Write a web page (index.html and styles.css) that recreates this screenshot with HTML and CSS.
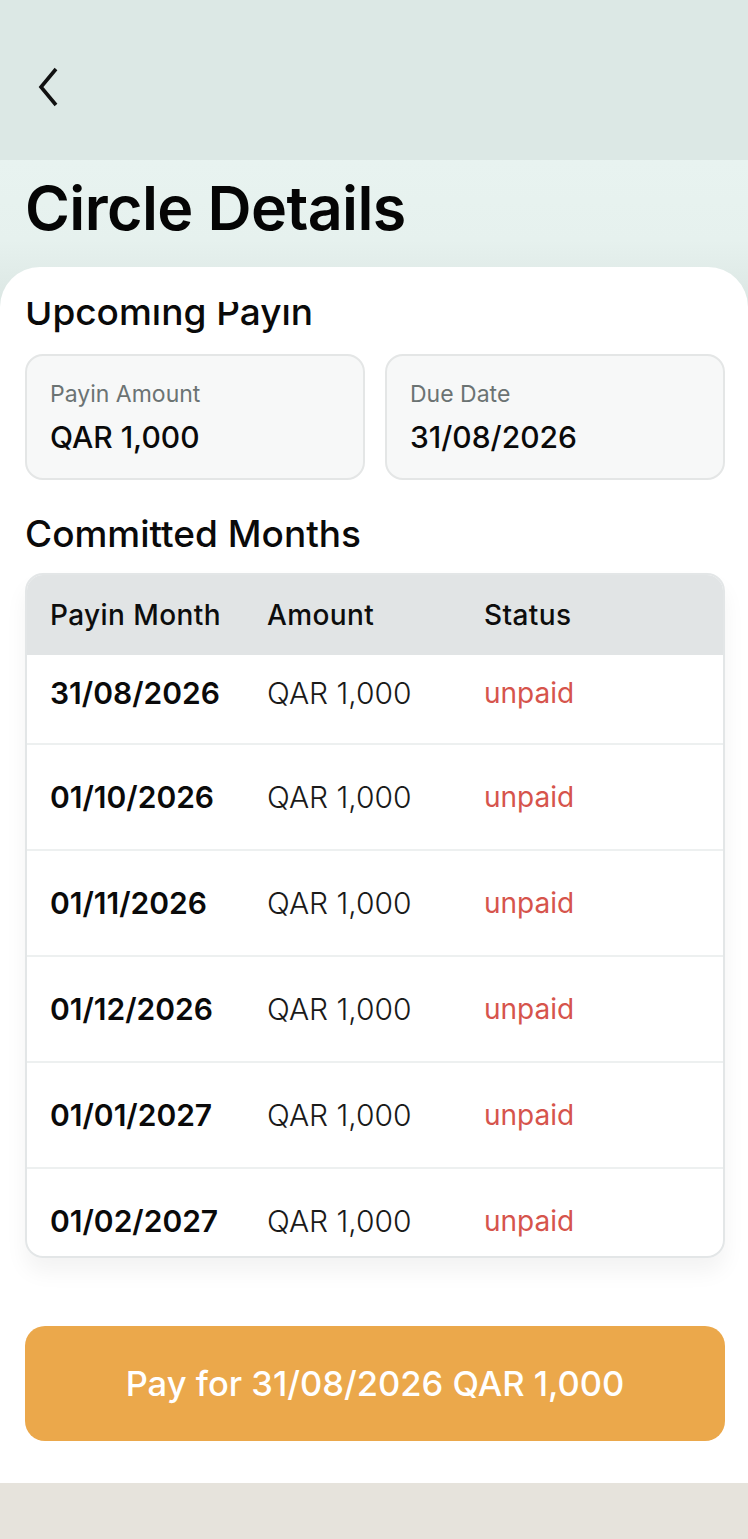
FILE: index.html
```html
<!DOCTYPE html>
<html lang="en">
<head>
    <meta charset="UTF-8">
    <meta name="viewport" content="width=device-width, initial-scale=1.0">
    <title>Circle Details</title>
    <link rel="stylesheet" href="styles.css">
</head>
<body>
    <div class="page">
        <div class="topbar">
            <a href="#" class="back-btn" aria-label="Back">
                <svg width="24" height="40" viewBox="0 0 24 40">
                    <path d="M20 2 L5 20 L20 38" fill="none" stroke="#111" stroke-width="3.6"/>
                </svg>
            </a>
        </div>

        <div class="title-area">
            <h1>Circle Details</h1>
        </div>

        <div class="sheet">
            <div class="scroll">
                <h2 class="section-title upcoming">Upcoming Payin</h2>

                <div class="info-row">
                    <div class="info-card">
                        <span class="info-label">Payin Amount</span>
                        <span class="info-value">QAR 1,000</span>
                    </div>
                    <div class="info-card">
                        <span class="info-label">Due Date</span>
                        <span class="info-value">31/08/2026</span>
                    </div>
                </div>

                <h2 class="section-title committed">Committed Months</h2>

                <div class="table">
                    <div class="table-head">
                        <span>Payin Month</span>
                        <span>Amount</span>
                        <span>Status</span>
                    </div>
                    <div class="table-body">
                        <div class="table-row first">
                            <span class="date">31/08/2026</span>
                            <span class="amount">QAR 1,000</span>
                            <span class="status">unpaid</span>
                        </div>
                        <div class="table-row">
                            <span class="date">01/10/2026</span>
                            <span class="amount">QAR 1,000</span>
                            <span class="status">unpaid</span>
                        </div>
                        <div class="table-row">
                            <span class="date">01/11/2026</span>
                            <span class="amount">QAR 1,000</span>
                            <span class="status">unpaid</span>
                        </div>
                        <div class="table-row">
                            <span class="date">01/12/2026</span>
                            <span class="amount">QAR 1,000</span>
                            <span class="status">unpaid</span>
                        </div>
                        <div class="table-row">
                            <span class="date">01/01/2027</span>
                            <span class="amount">QAR 1,000</span>
                            <span class="status">unpaid</span>
                        </div>
                        <div class="table-row">
                            <span class="date">01/02/2027</span>
                            <span class="amount">QAR 1,000</span>
                            <span class="status">unpaid</span>
                        </div>
                    </div>
                </div>

                <button class="pay-btn">Pay for 31/08/2026 QAR 1,000</button>
            </div>
        </div>

        <div class="bottom-bar"></div>
    </div>
</body>
</html>
```

FILE: styles.css
```css
* {
    box-sizing: border-box;
}

body {
    margin: 0;
    font-family: Inter, "Liberation Sans", sans-serif;
    color: #111;
    background: #e6e3dc;
}

.page {
    width: 748px;
    height: 1539px;
    display: flex;
    flex-direction: column;
    overflow: hidden;
}

.topbar {
    height: 160px;
    flex-shrink: 0;
    background: #dce8e5;
    display: flex;
    align-items: center;
    padding-left: 36px;
    padding-top: 14px;
}

.back-btn {
    display: flex;
}

.title-area {
    height: 147px;
    flex-shrink: 0;
    margin-bottom: -40px;
    background: linear-gradient(180deg, #e8f3f0 0%, #e6f1ee 55%, #dbe6e3 100%);
    padding: 12px 25px 0;
}

.title-area h1 {
    margin: 0;
    font-size: 61px;
    font-weight: 600;
    line-height: 72px;
    letter-spacing: -0.6px;
    color: #050505;
}

.sheet {
    flex: 1;
    background: #fff;
    border-radius: 40px 40px 0 0;
    padding-top: 35px;
    overflow: hidden;
}

.scroll {
    display: flow-root;
    height: 100%;
    overflow: hidden;
    padding: 0 23px 0 25px;
}

.section-title {
    margin: 0;
    font-size: 37px;
    font-weight: 500;
    line-height: 40px;
    color: #0a0a0a;
}

.upcoming {
    margin-top: -10px;
}

.info-row {
    display: grid;
    grid-template-columns: 1fr 1fr;
    gap: 20px;
    margin-top: 22px;
}

.info-card {
    height: 126px;
    background: #f7f8f8;
    border: 2px solid #e4e6e6;
    border-radius: 18px;
    padding: 24px 23px;
    display: flex;
    flex-direction: column;
    gap: 12px;
}

.info-label {
    font-size: 23px;
    line-height: 28px;
    color: #6b7373;
}

.info-value {
    font-size: 30px;
    line-height: 34px;
    font-weight: 500;
    color: #0a0a0a;
}

.committed {
    margin-top: 34px;
}

.table {
    margin-top: 19px;
    height: 685px;
    border: 2px solid #e3e6e7;
    border-radius: 18px;
    overflow: hidden;
    box-shadow: 0 14px 22px rgba(0, 0, 0, 0.05);
}

.table-head,
.table-row {
    display: grid;
    grid-template-columns: 217px 217px 1fr;
    align-items: center;
    padding-left: 23px;
}

.table-head {
    height: 80px;
    background: #e1e4e5;
    font-size: 28px;
    font-weight: 500;
    letter-spacing: 0.4px;
    color: #0d0d0d;
}

.table-row {
    height: 106px;
    border-bottom: 2px solid #edf0f0;
    font-size: 30px;
}

.table-row.first {
    height: 90px;
    padding-bottom: 12px;
}

.date {
    font-weight: 600;
    color: #0a0a0a;
}

.amount {
    font-weight: 300;
    color: #1a1a1a;
}

.status {
    font-size: 28px;
    color: #d6544c;
}

.pay-btn {
    display: block;
    width: 100%;
    height: 115px;
    margin-top: 68px;
    border: none;
    border-radius: 20px;
    background: #eba84b;
    color: #fff;
    font-family: inherit;
    font-size: 34.5px;
    font-weight: 500;
    cursor: pointer;
}

.bottom-bar {
    height: 56px;
    flex-shrink: 0;
    background: #e6e3dc;
}
```
